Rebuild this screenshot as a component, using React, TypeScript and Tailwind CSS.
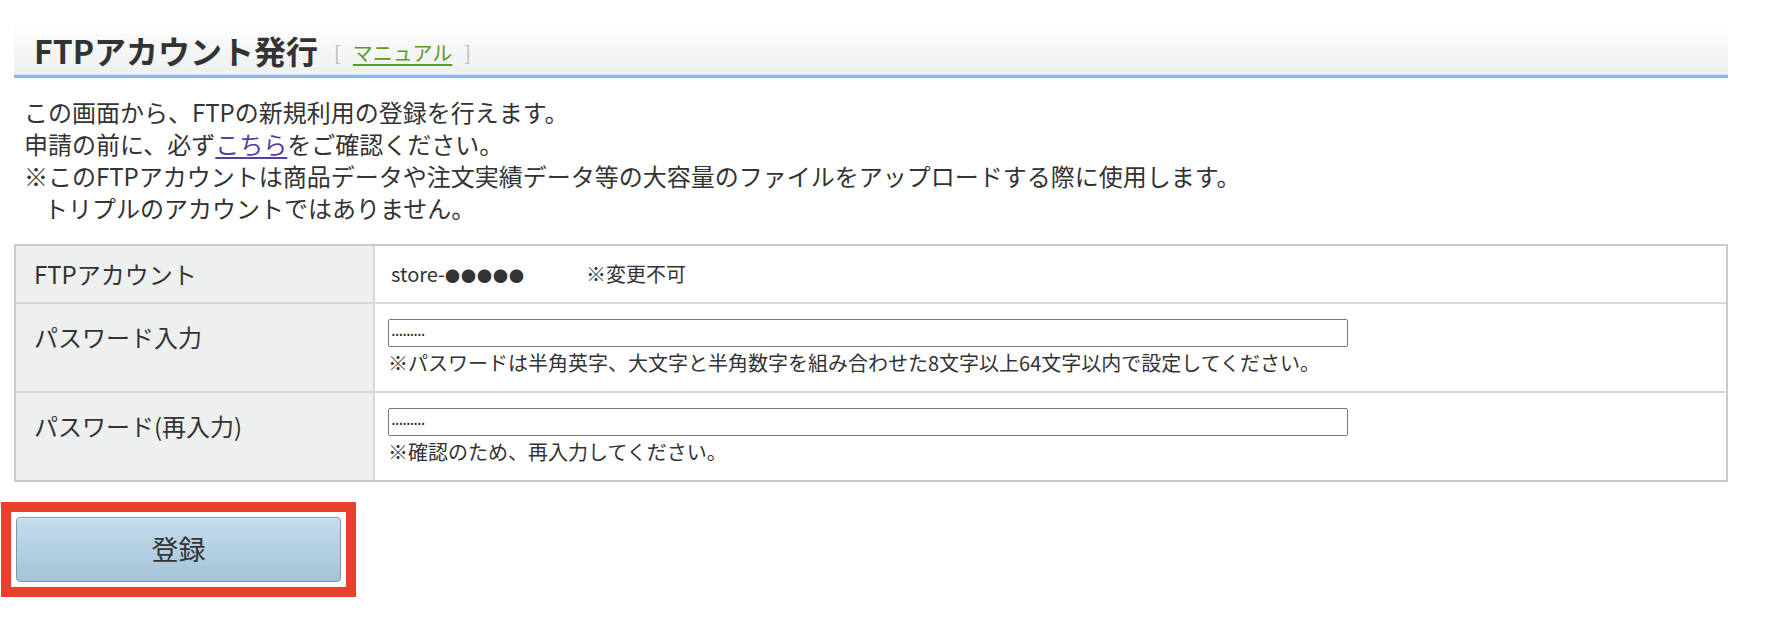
import React from "react";

const jp = "font-['Noto_Sans_CJK_JP','Noto_Sans',sans-serif]";

type RowProps = {
  label: string;
  children: React.ReactNode;
  last?: boolean;
  tall?: boolean;
};

const FormRow = ({ label, children, last, tall }: RowProps) => {
  return (
    <div
      className={`flex ${last ? "" : "border-b-2 border-[#d6d8d8]"} ${
        tall ? "" : "h-[58px] items-center"
      }`}
    >
      <div
        className={`w-[359px] shrink-0 self-stretch bg-[#eef0f0] border-r-2 border-[#d6d8d8] pl-[18px] text-[24px] text-[#333] ${
          tall ? "pt-[15px]" : "flex items-center"
        }`}
      >
        {label}
      </div>
      <div className={`flex-1 pl-[13px] ${tall ? "pt-[15px] pb-[13px]" : ""}`}>
        {children}
      </div>
    </div>
  );
};

const PasswordField = ({ hint }: { hint: string }) => {
  return (
    <div className="flex flex-col">
      <input
        type="text"
        readOnly
        value="•••••••••"
        className="w-[960px] h-[28px] border border-[#7a7a7a] rounded-[2px] px-[3px] text-[8px] tracking-[1px] leading-none text-[#222] outline-none"
      />
      <p className="text-[20px] leading-[30px] text-[#333] mt-[1px]">{hint}</p>
    </div>
  );
};

export default function App() {
  return (
    <div className={`${jp} bg-white w-[1770px] h-[634px] pt-[20px]`}>
      {/* Page heading */}
      <div className="ml-[14px] w-[1714px]">
        <div className="h-[54px] bg-gradient-to-b from-white to-[#eeefef] flex items-end pb-[8px] pl-[20px]">
          <h1 className="text-[32px] font-bold leading-none text-[#333]">
            FTPアカウント発行
          </h1>
          <span className="ml-[16px] mb-[3px] text-[20px] leading-none text-[#bbb]">
            [
            <a
              href="#"
              className="mx-[12px] text-[#5c9b1f] underline underline-offset-[3px]"
            >
              マニュアル
            </a>
            ]
          </span>
        </div>
        <div className="h-[1px] bg-[#d2e3f5]" />
        <div className="h-[3px] bg-[#8db7e6]" />
      </div>

      {/* Description */}
      <div className="ml-[24px] mt-[18px] text-[24px] leading-[32px] text-[#333]">
        <p>この画面から、FTPの新規利用の登録を行えます。</p>
        <p>
          申請の前に、必ず
          <a href="#" className="text-[#5a3f9a] underline underline-offset-[3px]">
            こちら
          </a>
          をご確認ください。
        </p>
        <p>
          ※このFTPアカウントは商品データや注文実績データ等の大容量のファイルをアップロードする際に使用します。
        </p>
        <p className="pl-[20px]">トリプルのアカウントではありません。</p>
      </div>

      {/* Form table */}
      <div className="ml-[14px] mt-[20px] w-[1714px] border-2 border-[#c9cbcb]">
        <FormRow label="FTPアカウント">
          <div className="flex items-center text-[20px] text-[#333]">
            <span className="w-[198px] pl-[3px]">
              store-<span className="text-[15px] tracking-[1px]">●●●●●</span>
            </span>
            <span>※変更不可</span>
          </div>
        </FormRow>
        <FormRow label="パスワード入力" tall>
          <PasswordField hint="※パスワードは半角英字、大文字と半角数字を組み合わせた8文字以上64文字以内で設定してください。" />
        </FormRow>
        <FormRow label="パスワード(再入力)" tall last>
          <PasswordField hint="※確認のため、再入力してください。" />
        </FormRow>
      </div>

      {/* Submit */}
      <div className="ml-[1px] mt-[20px] w-[355px] border-[10px] border-[#e8402a] p-[5px]">
        <button
          type="button"
          className="w-full h-[65px] rounded-[4px] border border-[#7f97ad] bg-gradient-to-b from-[#c5dcee] to-[#a3c3d8] text-[27px] text-[#333] shadow-[inset_0_1px_0_rgba(255,255,255,0.6)]"
        >
          登録
        </button>
      </div>
    </div>
  );
}
